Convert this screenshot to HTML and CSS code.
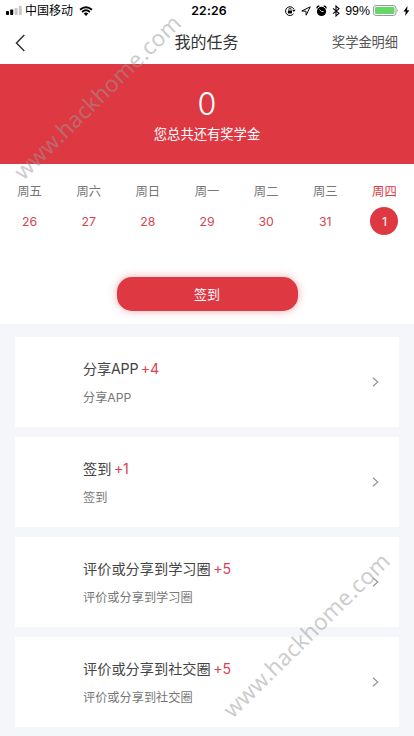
FILE: index.html
```html
<!DOCTYPE html>
<html lang="zh-CN">
<head>
<meta charset="utf-8">
<title>我的任务</title>
<link rel="stylesheet" href="styles.css">
</head>
<body>
<div class="screen">
  <div class="status">
    <div class="status-left">
      <svg class="signal" width="16" height="9" viewBox="0 0 16 9"><rect x="0" y="5" width="3" height="4" rx=".7"/><rect x="4.2" y="3.5" width="3" height="5.5" rx=".7"/><rect x="8.6" y="2" width="3" height="7" rx=".7" fill="#c8c8c8"/><rect x="12.8" y="0" width="3" height="9" rx=".7" fill="#c8c8c8"/></svg>
      <span class="carrier">中国移动</span>
      <svg width="14" height="10" viewBox="0 0 14 10"><path d="M1 3.7Q7-1.3 13 3.7M3.1 6Q7 2.7 10.9 6" fill="none" stroke="#000" stroke-width="1.9"/><path d="M4.7 7.5Q7 5.7 9.3 7.5L7 10z"/></svg>
    </div>
    <div class="clock">22:26</div>
    <div class="status-right">
      <svg width="12" height="12" viewBox="0 0 12 12"><path d="M9.6 8.6A4.4 4.4 0 1 1 9.8 4" fill="none" stroke="#000"/><path d="M8.2 4.7h3.4L9.9 7z"/><rect x="3.9" y="5.4" width="4.1" height="3" rx=".4"/><path d="M4.8 5.5V4.4a1.15 1.15 0 0 1 2.3 0v1.1" fill="none" stroke="#000" stroke-width=".8"/></svg>
      <svg width="10" height="10" viewBox="0 0 10 10"><path d="M.8 5L9.2.8 5.2 9.2 4.9 5.2z" fill="none" stroke="#000" stroke-width="1"/></svg>
      <svg width="11" height="12" viewBox="0 0 11 12"><circle cx="5.5" cy="6.4" r="4.6"/><path d="M.7 3.3Q1 1.2 3.3 1M10.3 3.3Q10 1.2 7.7 1" fill="none" stroke="#000" stroke-width="1.3"/><path d="M3.4 4.5l2.2 2h2" fill="none" stroke="#fff" stroke-width=".8"/></svg>
      <svg width="8" height="12" viewBox="0 0 8 12"><path d="M1 3.3l6 5L4 11V1l3 2.7-6 5" fill="none" stroke="#000" stroke-width="1.1"/></svg>
      <span class="percent">99%</span>
      <svg width="26" height="11" viewBox="0 0 26 11"><rect x=".5" y=".5" width="22.5" height="10" rx="2.7" fill="#fff" stroke="#999"/><rect x="2" y="2" width="19.5" height="7" rx="1.2" fill="#64d765"/><path d="M24.2 3.8q1.6 1.7 0 3.4z" fill="#999"/></svg>
      <svg class="bolt" width="7" height="10" viewBox="0 0 7 10"><path d="M4.6 0L.4 5.6h2.4L2 10l4.4-5.7H4z"/></svg>
    </div>
  </div>
  <header class="nav">
    <svg class="back" width="11" height="18" viewBox="0 0 11 18"><path d="M9.3 1L1.5 9l7.8 8" fill="none" stroke="#333" stroke-width="1.5"/></svg>
    <h1>我的任务</h1>
    <span class="detail">奖学金明细</span>
  </header>
  <section class="summary">
    <div class="amount">0</div>
    <div class="caption">您总共还有奖学金</div>
  </section>
  <section class="checkin">
    <div class="week">
      <div class="day"><span>周五</span><b>26</b></div>
      <div class="day"><span>周六</span><b>27</b></div>
      <div class="day"><span>周日</span><b>28</b></div>
      <div class="day"><span>周一</span><b>29</b></div>
      <div class="day"><span>周二</span><b>30</b></div>
      <div class="day"><span>周三</span><b>31</b></div>
      <div class="day today"><span>周四</span><b>1</b></div>
    </div>
    <div class="sign">签到</div>
  </section>
  <main class="tasks">
    <div class="task"><div><div class="name"><span class="latin">分享APP</span><em>+4</em></div><div class="sub">分享APP</div></div><svg width="7" height="10" viewBox="0 0 7 10"><path d="M1 .7L5.8 5 1 9.3"/></svg></div>
    <div class="task"><div><div class="name">签到<em>+1</em></div><div class="sub">签到</div></div><svg width="7" height="10" viewBox="0 0 7 10"><path d="M1 .7L5.8 5 1 9.3"/></svg></div>
    <div class="task"><div><div class="name">评价或分享到学习圈<em>+5</em></div><div class="sub">评价或分享到学习圈</div></div><svg width="7" height="10" viewBox="0 0 7 10"><path d="M1 .7L5.8 5 1 9.3"/></svg></div>
    <div class="task"><div><div class="name">评价或分享到社交圈<em>+5</em></div><div class="sub">评价或分享到社交圈</div></div><svg width="7" height="10" viewBox="0 0 7 10"><path d="M1 .7L5.8 5 1 9.3"/></svg></div>
  </main>
  <svg class="watermark" width="414" height="736" viewBox="0 0 414 736">
    <text transform="translate(23.5 181) rotate(-44.5)" textLength="223">www.hackhome.com</text>
    <text transform="translate(232.5 719) rotate(-44.5)" textLength="223">www.hackhome.com</text>
  </svg>
</div>
</body>
</html>
```

FILE: styles.css
```css
* { box-sizing: border-box; }
body {
  margin: 0;
  background: #f4f6f9;
  font-family: Inter, "Noto Sans CJK SC", sans-serif;
  color: #444;
}
svg { display: block; flex: none; }
.screen { position: relative; height: 736px; overflow: hidden; }

.status {
  display: grid;
  grid-template-columns: 1fr auto 1fr;
  align-items: center;
  height: 20px;
  padding: 0 4px 0 6px;
  background: #fff;
  color: #000;
}
.status-left, .status-right { display: flex; align-items: center; }
.carrier { margin: 0 6px 0 3px; padding-top: 1px; font-size: 12px; line-height: 20px; }
.clock { padding-left: 2px; font-size: 12.3px; font-weight: 600; letter-spacing: .1px; }
.status-right { justify-content: flex-end; gap: 5px; }
.percent { margin: 0 -2px 0 0; font-family: "Liberation Sans", sans-serif; font-size: 12.4px; }
.bolt { margin-left: -1px; }

.nav {
  display: grid;
  grid-template-columns: 1fr auto 1fr;
  align-items: center;
  height: 44px;
  padding: 0 16px 2px 15px;
  background: #fff;
}
.nav h1 { margin: 0; font-size: 16px; font-weight: 400; color: #333; }
.back { position: relative; top: 2px; }
.detail { justify-self: end; font-size: 13.2px; color: #555; }

.summary { height: 100px; padding-top: 21px; background: #de3842; color: #fff; text-align: center; }
.amount { height: 38px; font-family: Inter, sans-serif; font-size: 30.5px; font-weight: 300; line-height: 38px; }
.caption { font-size: 13.3px; line-height: 22px; }

.checkin { height: 160px; padding-top: 16px; background: #fff; }
.week { display: grid; grid-template-columns: repeat(7, 1fr); }
.day { display: flex; flex-direction: column; align-items: center; gap: 4px; font-size: 12.3px; line-height: 23px; color: #777; }
.day b { width: 28px; height: 28px; border-radius: 50%; line-height: 29px; text-align: center; font-weight: 400; color: #d54450; }
.today { color: #de3842; }
.day.today b { background: #de3842; color: #fff; }
.sign {
  width: 181px;
  height: 34px;
  margin: 42px auto 0;
  border-radius: 15px;
  background: #de3842;
  box-shadow: 0 0 9px rgba(222, 56, 66, .42);
  color: #fff;
  font-size: 13px;
  line-height: 34px;
  text-align: center;
}

.tasks { display: grid; gap: 10px; padding: 13px 15px 0; }
.task { display: flex; align-items: center; justify-content: space-between; height: 90px; padding: 0 20px 0 68px; background: #fff; }
.task svg { fill: none; stroke: #999; stroke-width: 1.3; }
.name { padding-top: 2px; font-size: 14.2px; line-height: 28px; }
.name em { margin-left: 2.5px; font-style: normal; letter-spacing: -.2px; color: #d9434f; }
.latin { letter-spacing: -.2px; }
.sub { padding-top: 1px; font-size: 12.2px; line-height: 27px; color: #777; }

.watermark { position: absolute; inset: 0; pointer-events: none; }
.watermark text { font-family: "Noto Sans", sans-serif; font-size: 22.5px; fill: #999; fill-opacity: .5; }
```
